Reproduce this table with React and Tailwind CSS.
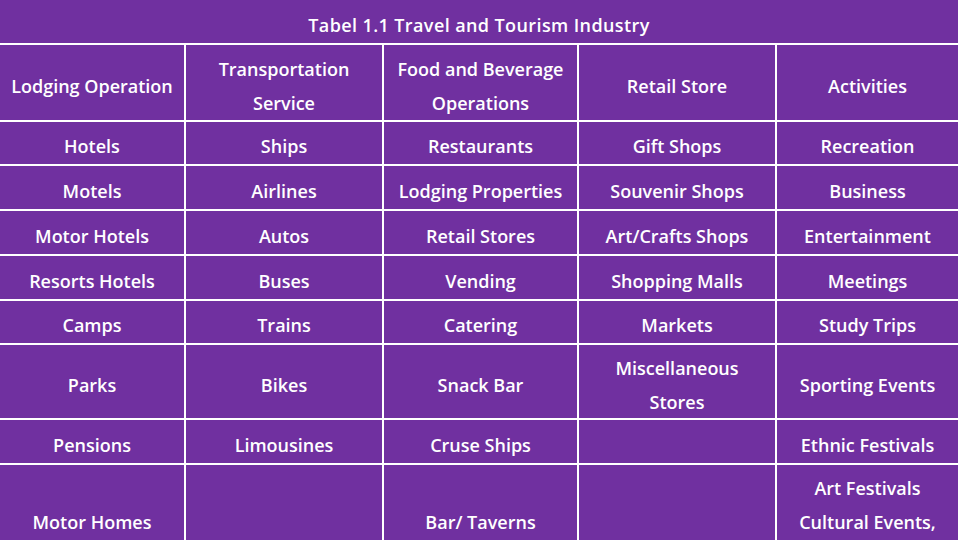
import React from "react";

const rows = [
  [["Lodging Operation"], ["Transportation", "Service"], ["Food and Beverage", "Operations"], ["Retail Store"], ["Activities"]],
  [["Hotels"], ["Ships"], ["Restaurants"], ["Gift Shops"], ["Recreation"]],
  [["Motels"], ["Airlines"], ["Lodging Properties"], ["Souvenir Shops"], ["Business"]],
  [["Motor Hotels"], ["Autos"], ["Retail Stores"], ["Art/Crafts Shops"], ["Entertainment"]],
  [["Resorts Hotels"], ["Buses"], ["Vending"], ["Shopping Malls"], ["Meetings"]],
  [["Camps"], ["Trains"], ["Catering"], ["Markets"], ["Study Trips"]],
  [["Parks"], ["Bikes"], ["Snack Bar"], ["Miscellaneous", "Stores"], ["Sporting Events"]],
  [["Pensions"], ["Limousines"], ["Cruse Ships"], [], ["Ethnic Festivals"]],
  [["Motor Homes"], [], ["Bar/ Taverns"], [], ["Art Festivals", "Cultural Events,", "\u00a0"]],
];

export default function App() {
  return (
    <div
      className="w-[960px] h-[540px] overflow-hidden bg-white text-white"
      style={{ fontFamily: '"Open Sans", "Liberation Sans", sans-serif' }}
    >
      <div className="grid grid-cols-[184px_196px_193px_196px_181px] grid-rows-[43px_75px_42px_43px_43px_43px_42px_73px_43px_107px] gap-[2px] pr-[2px] bg-white">
        <div className="col-span-5 bg-[#7030a0] flex items-center justify-center pt-[8px] text-[18px] font-semibold tracking-[0.4px]">
          Tabel 1.1 Travel and Tourism Industry
        </div>
        {rows.map((r, i) =>
          r.map((cell, j) => (
            <div
              key={i + "-" + j}
              className="bg-[#7030a0] flex flex-col items-center justify-center pt-[6px] text-[18px] font-semibold leading-[34px] text-center whitespace-nowrap"
            >
              {cell.map((t, k) => (
                <span key={k}>{t}</span>
              ))}
            </div>
          ))
        )}
      </div>
    </div>
  );
}
